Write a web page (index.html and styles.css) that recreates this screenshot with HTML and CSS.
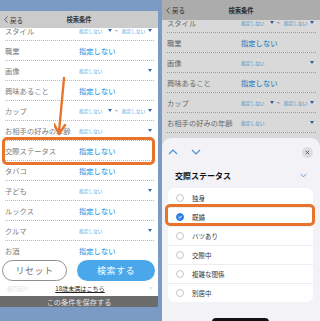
FILE: index.html
```html
<!DOCTYPE html>
<html lang="ja">
<head>
<meta charset="utf-8">
<title>検索条件</title>
<link rel="stylesheet" href="styles.css">
</head>
<body>
<div class="stage">
  <section class="phone phone-left">
    <header class="nav">
      <span class="back"><svg class="back-ico" viewBox="0 0 4 7"><polyline points="3.5,0.5 0.8,3.5 3.5,6.5"/></svg>戻る</span>
      <span class="nav-title">検索条件</span>
      <span></span>
    </header>
    <div class="list">
      <div class="row-clip">
        <div class="row"><span class="label">スタイル</span><span class="range"><span class="val-sm">指定しない</span><i class="tri"></i><span class="tilde">~</span><span class="val-sm">指定しない</span><i class="tri"></i></span></div>
      </div>
      <div class="row"><span class="label">職業</span><span class="val-big">指定しない</span></div>
      <div class="row"><span class="label">画像</span><span class="val-sm">指定しない</span><i class="tri"></i></div>
      <div class="row"><span class="label">興味あること</span><span class="val-big">指定しない</span></div>
      <div class="row"><span class="label">カップ</span><span class="range"><span class="val-sm">指定しない</span><i class="tri"></i><span class="tilde">~</span><span class="val-sm">指定しない</span><i class="tri"></i></span></div>
      <div class="row"><span class="label">お相手の好みの年齢</span><span class="val-sm">指定しない</span><i class="tri"></i></div>
      <div class="row"><span class="label">交際ステータス</span><span class="val-big">指定しない</span></div>
      <div class="row"><span class="label">タバコ</span><span class="val-big">指定しない</span></div>
      <div class="row"><span class="label">子ども</span><span class="val-sm">指定しない</span><i class="tri"></i></div>
      <div class="row"><span class="label">ルックス</span><span class="val-big">指定しない</span></div>
      <div class="row"><span class="label">クルマ</span><span class="val-sm">指定しない</span><i class="tri"></i></div>
      <div class="row row-last"><span class="label">お酒</span><span class="val-big">指定しない</span></div>
    </div>
    <div class="actions">
      <button class="btn btn-reset">リセット</button>
      <button class="btn btn-search">検索する</button>
    </div>
    <div class="link-row">
      <span class="ghost">相互紹介</span>
      <a class="under18">18歳未満はこちら</a>
      <i class="ghost-tri"></i>
    </div>
    <div class="save-bar">この条件を保存する</div>
  </section>

  <section class="phone phone-right">
    <header class="nav nav-right">
      <span class="back"><svg class="back-ico" viewBox="0 0 4 7"><polyline points="3.5,0.5 0.8,3.5 3.5,6.5"/></svg>戻る</span>
      <span class="nav-title">検索条件</span>
      <span></span>
    </header>
    <div class="list">
      <div class="row-clip">
        <div class="row"><span class="label">スタイル</span><span class="range"><span class="val-sm">指定しない</span><i class="tri"></i><span class="tilde">~</span><span class="val-sm">指定しない</span><i class="tri"></i></span></div>
      </div>
      <div class="row"><span class="label">職業</span><span class="val-big">指定しない</span></div>
      <div class="row"><span class="label">画像</span><span class="val-sm">指定しない</span><i class="tri"></i></div>
      <div class="row"><span class="label">興味あること</span><span class="val-big">指定しない</span></div>
      <div class="row"><span class="label">カップ</span><span class="range"><span class="val-sm">指定しない</span><i class="tri"></i><span class="tilde">~</span><span class="val-sm">指定しない</span><i class="tri"></i></span></div>
      <div class="row"><span class="label">お相手の好みの年齢</span><span class="val-sm">指定しない</span><i class="tri"></i></div>
      <div class="row"><span class="label">交際ステータス</span><span class="val-sm">指定しない</span><i class="tri"></i></div>
    </div>
    <div class="dim"></div>
    <div class="sheet">
      <div class="sheet-bar">
        <svg class="chev" viewBox="0 0 10 6"><polyline points="1,5 5,1 9,5"/></svg>
        <svg class="chev" viewBox="0 0 10 6"><polyline points="1,1 5,5 9,1"/></svg>
        <span class="spacer"></span>
        <span class="close"><svg viewBox="0 0 6 6"><path d="M1,1 L5,5 M5,1 L1,5"/></svg></span>
      </div>
      <div class="sheet-title">
        <span>交際ステータス</span>
        <svg class="chev-sm" viewBox="0 0 8 5"><polyline points="1,1 4,4 7,1"/></svg>
      </div>
      <div class="card">
        <div class="opt"><i class="radio"></i><span>独身</span></div>
        <div class="opt"><i class="radio radio-on"><svg viewBox="0 0 8 8"><polyline points="2,4.2 3.5,5.6 6,2.6"/></svg></i><span>既婚</span></div>
        <div class="opt"><i class="radio"></i><span>バツあり</span></div>
        <div class="opt"><i class="radio"></i><span>交際中</span></div>
        <div class="opt"><i class="radio"></i><span>複雑な関係</span></div>
        <div class="opt"><i class="radio"></i><span>別居中</span></div>
      </div>
      <div class="sheet-btn"></div>
    </div>
  </section>

  <div class="note note-left"></div>
  <div class="note note-right"></div>
  <svg class="arrow" viewBox="0 0 20 64"><path d="M10,2 L5,56 M0,48 L5,58 L11,49"/></svg>
</div>
</body>
</html>
```
FILE: styles.css
```css
* { box-sizing: border-box; }
html, body { margin: 0; padding: 0; }
body {
  width: 320px;
  height: 321px;
  overflow: hidden;
  background: #7b9bc5;
  font-family: "Noto Sans CJK JP", "Noto Sans", sans-serif;
}
.stage {
  position: relative;
  display: flex;
  gap: 4px;
  width: 320px;
  height: 321px;
}
.phone {
  width: 158px;
  background: #ffffff;
  overflow: hidden;
  display: flex;
  flex-direction: column;
}
.phone-left {
  margin-top: 11px;
  height: 296px;
}
.phone-right {
  position: relative;
  height: 321px;
}

/* nav */
.nav {
  height: 17px;
  flex-shrink: 0;
  background: #cbcbcb;
  display: grid;
  grid-template-columns: 1fr auto 1fr;
  align-items: center;
  padding: 0 4px;
  color: #333;
  font-size: 6.5px;
}
.nav-right { height: 20px; }
.back { display: flex; align-items: center; gap: 2px; }
.back-ico { width: 4px; height: 7px; fill: none; stroke: #444; stroke-width: 0.8; }
.nav-title { font-weight: bold; font-size: 6.3px; }

/* list */
.list {
  display: flex;
  flex-direction: column;
  padding: 0 4px 0 5px;
}
.row-clip {
  height: 13px;
  overflow: hidden;
  display: flex;
  flex-direction: column;
  justify-content: flex-end;
  flex-shrink: 0;
}
.row {
  height: 20px;
  flex-shrink: 0;
  display: grid;
  grid-template-columns: 74px 1fr auto;
  align-items: center;
  padding-right: 2px;
  border-bottom: 1px dotted #b8b8b8;
}
.row-last { height: 19px; border-bottom: none; }
.label {
  font-size: 7.3px;
  color: #7d7d7d;
  white-space: nowrap;
}
.val-big {
  font-size: 7.3px;
  color: #4aa2e4;
  font-weight: 500;
}
.val-sm {
  font-size: 4.7px;
  color: #4aa2e4;
  white-space: nowrap;
}
.tri {
  display: block;
  width: 0;
  height: 0;
  border-left: 2px solid transparent;
  border-right: 2px solid transparent;
  border-top: 3px solid #3a6db3;
}
.range {
  grid-column: 2 / 4;
  display: flex;
  align-items: center;
}
.range .tri { margin-left: 6px; }
.range .tilde { font-size: 6px; color: #3a6db3; margin: 0 4px 0 2px; }
.range .tri:last-child { margin-left: auto; }

/* actions */
.actions {
  height: 21px;
  flex-shrink: 0;
  display: flex;
  gap: 10px;
  padding: 0 3px 0 2px;
}
.btn {
  font-family: inherit;
  border-radius: 11px;
  font-size: 9px;
  padding: 0;
  height: 21px;
}
.btn-reset {
  width: 65px;
  background: #fff;
  border: 1px solid #8f8f8f;
  color: #707070;
  letter-spacing: 0.5px;
}
.btn-search {
  flex: 1;
  background: #4aa8ea;
  border: none;
  color: #ffffff;
  letter-spacing: 0.5px;
}
.link-row {
  height: 15px;
  flex-shrink: 0;
  display: grid;
  grid-template-columns: 1fr auto 1fr;
  align-items: center;
  padding: 0 5px 0 7px;
}
.ghost { font-size: 5.5px; color: #e2e2e2; }
.under18 {
  font-size: 6.1px;
  color: #222;
  text-decoration: underline;
}
.ghost-tri {
  justify-self: end;
  width: 0; height: 0;
  border-left: 2px solid transparent;
  border-right: 2px solid transparent;
  border-top: 3px solid #e6e6e6;
}
.save-bar {
  height: 11px;
  flex-shrink: 0;
  background: #6c6c6c;
  color: #e4e4e4;
  font-size: 7.2px;
  display: flex;
  align-items: center;
  justify-content: center;
}

/* dim + sheet */
.dim {
  position: absolute;
  inset: 0;
  background: rgba(0, 0, 0, 0.15);
}
.sheet {
  position: absolute;
  left: 0;
  right: 0;
  top: 138px;
  bottom: -20px;
  background: #f2f2f7;
  border-radius: 9px 9px 0 0;
  padding: 4px 7px 0 6px;
  display: flex;
  flex-direction: column;
}
.sheet-bar {
  height: 20px;
  display: flex;
  align-items: center;
  gap: 13px;
}
.chev { width: 10px; height: 6px; fill: none; stroke: #4f8fd0; stroke-width: 1.2; }
.spacer { flex: 1; }
.close {
  width: 11px;
  height: 11px;
  border-radius: 50%;
  background: #dcdce1;
  display: flex;
  align-items: center;
  justify-content: center;
}
.close svg { width: 5px; height: 5px; fill: none; stroke: #555; stroke-width: 1.1; }
.sheet-title {
  margin-top: 3px;
  height: 20px;
  display: flex;
  align-items: center;
  justify-content: space-between;
  padding: 0 6px 0 7px;
  font-size: 8px;
  font-weight: bold;
  color: #111;
}
.chev-sm { width: 7px; height: 5px; fill: none; stroke: #4f8fd0; stroke-width: 1.1; }
.card {
  margin-top: 3px;
  background: #ffffff;
  border-radius: 6px;
  display: flex;
  flex-direction: column;
}
.opt {
  height: 19px;
  display: flex;
  align-items: center;
  gap: 8px;
  padding-left: 8px;
  font-size: 6.5px;
  color: #333;
}
.opt + .opt { border-top: 1px solid #ededf0; }
.radio {
  width: 8px;
  height: 8px;
  border-radius: 50%;
  border: 1px solid #c6c6cb;
  display: flex;
}
.radio-on {
  background: #2f7fe8;
  border-color: #2f7fe8;
}
.radio-on svg { width: 6px; height: 6px; fill: none; stroke: #fff; stroke-width: 1.3; }
.sheet-btn {
  margin: 16px auto 0;
  width: 57px;
  height: 12px;
  background: #111;
  border-radius: 4px 4px 0 0;
}

/* annotations */
.note {
  position: absolute;
  border: 3px solid #e8732b;
  border-radius: 5px;
}
.note-left { left: 2px; top: 137px; width: 153px; height: 28px; }
.note-right { left: 165px; top: 204px; width: 150px; height: 22px; }
.arrow {
  position: absolute;
  left: 54px;
  top: 76px;
  width: 20px;
  height: 64px;
  fill: none;
  stroke: #e8732b;
  stroke-width: 2.4;
  stroke-linecap: round;
  stroke-linejoin: round;
}
```
